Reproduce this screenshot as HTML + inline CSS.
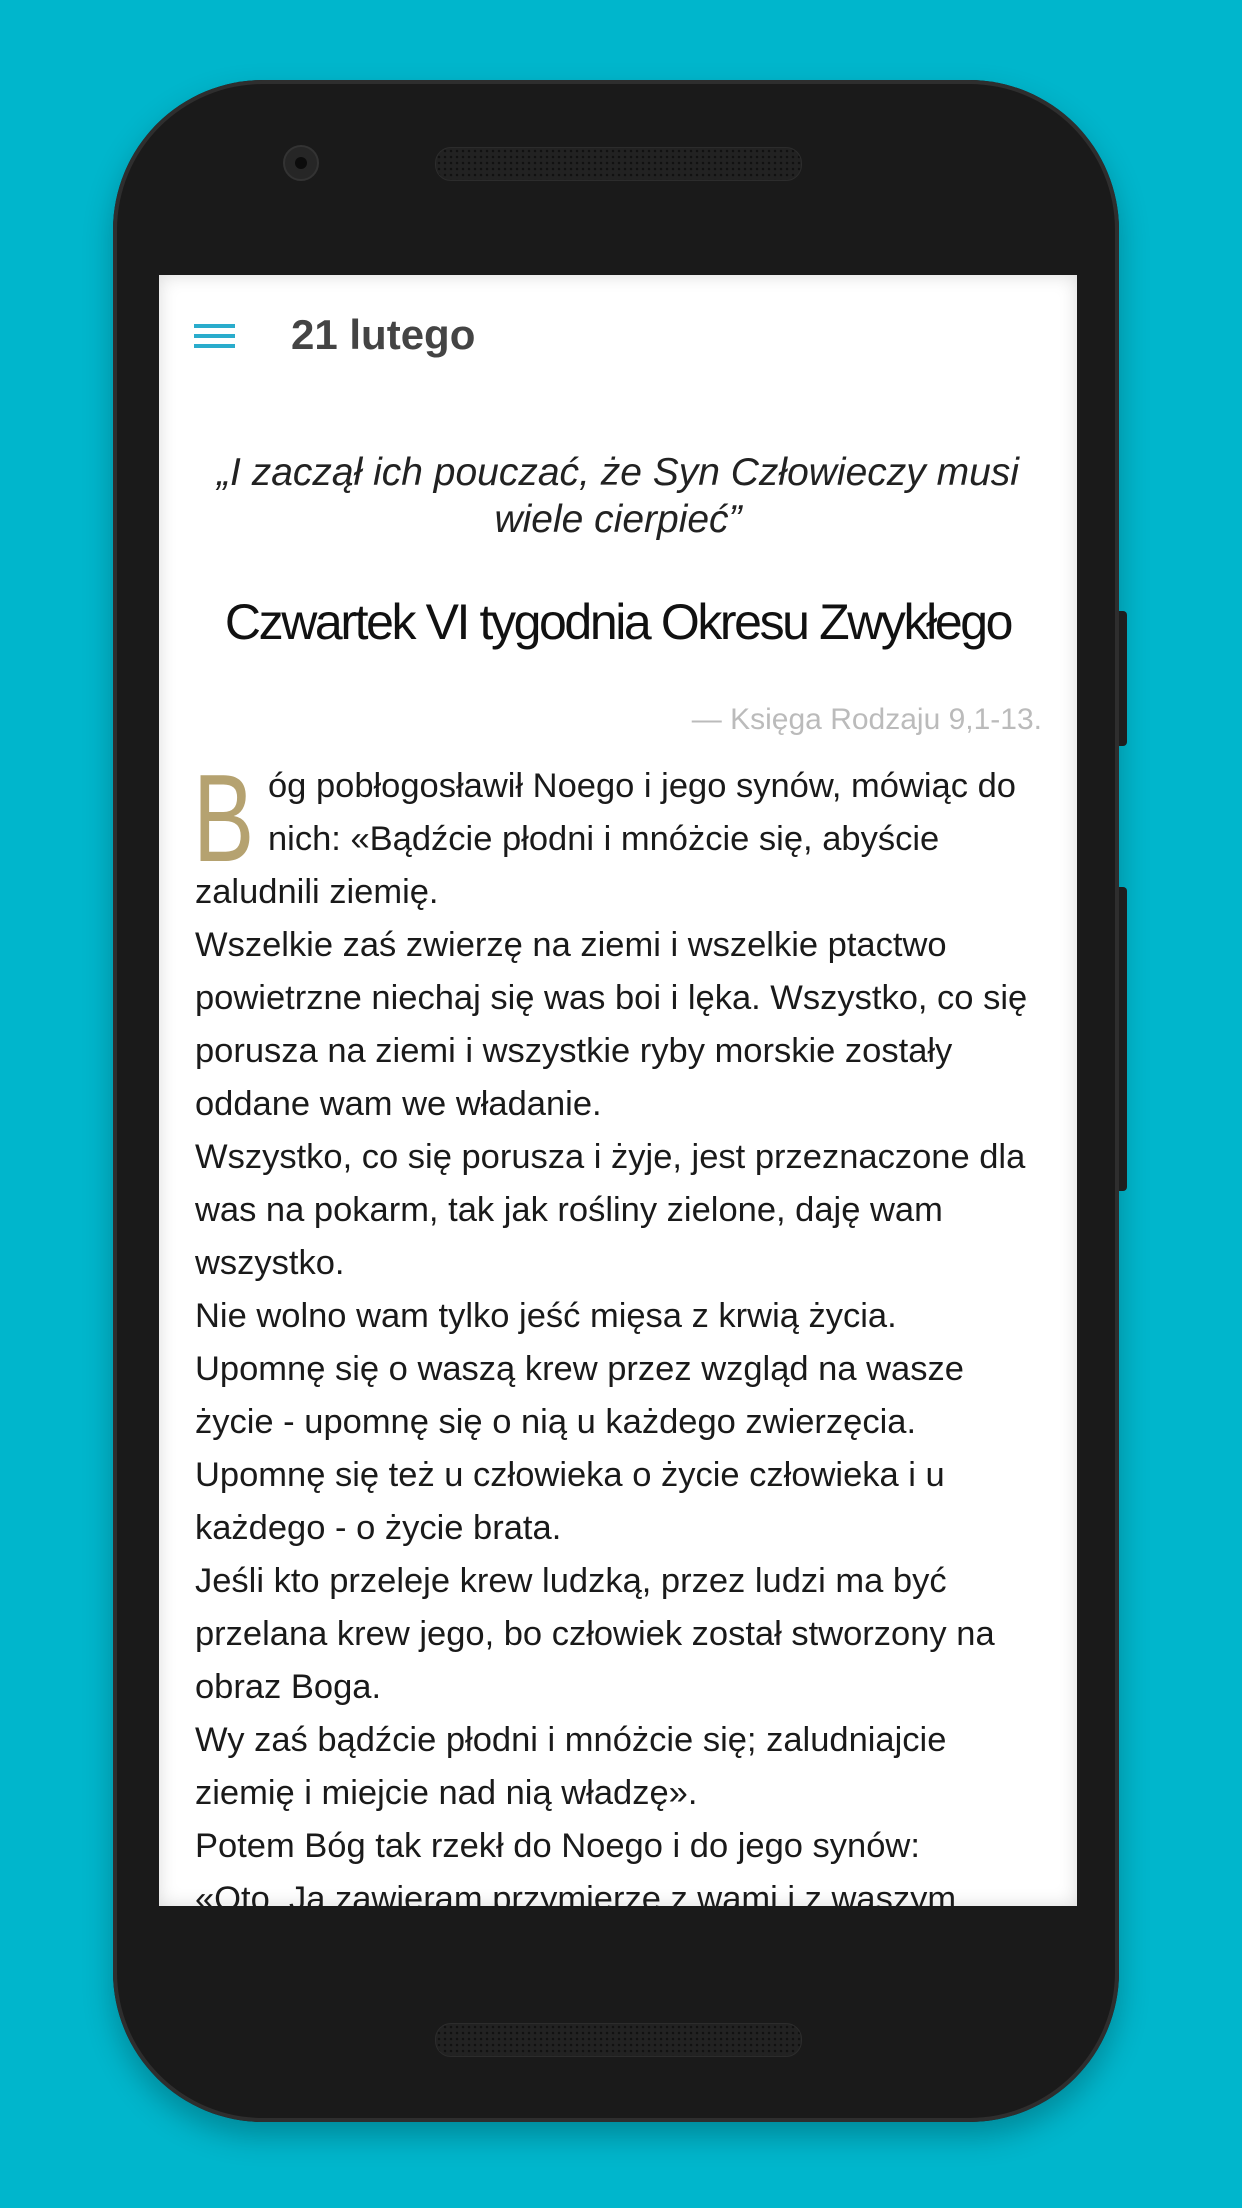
<!DOCTYPE html>
<html><head><meta charset="utf-8"><style>
html,body{margin:0;padding:0}
body{width:1242px;height:2208px;background:#00b6cc;position:relative;overflow:hidden;font-family:"Liberation Sans",sans-serif}
.phone{position:absolute;left:113px;top:80px;width:1006px;height:2042px;background:#1a1a1a;border-radius:150px;box-shadow:0 0 0 4px #2e2e2e inset,0 14px 30px rgba(0,0,0,.25)}
.btn{position:absolute;left:1117px;width:10px;background:#222;border-radius:0 4px 4px 0}
.speaker{position:absolute;left:322px;width:365px;height:32px;border-radius:16px;background:#222;border:1px solid #2c2c2c;
background-image:radial-gradient(#111 1.2px,transparent 1.4px);background-size:6px 6px}
.cam{position:absolute;left:170px;top:65px;width:36px;height:36px;border-radius:50%;background:#262626;border:2px solid #333;box-sizing:border-box}
.cam:after{content:"";position:absolute;left:10px;top:10px;width:12px;height:12px;border-radius:50%;background:#0c0c0c}
.screen{position:absolute;left:159px;top:275px;width:918px;height:1631px;background:#fff;overflow:hidden;box-shadow:inset 0 0 18px rgba(0,0,0,.15)}
.screen div{position:absolute;white-space:nowrap}
.ham{left:35px;width:41px;height:4px;background:#2aaccc}
.t{left:36px;font-size:34.5px;color:#1a1a1a;line-height:40px}
</style></head><body>
<div class="btn" style="top:611px;height:135px"></div>
<div class="btn" style="top:887px;height:304px"></div>
<div class="phone">
<div class="cam"></div>
<div class="speaker" style="top:67px"></div>
<div class="speaker" style="top:1943px"></div>
</div>
<div class="screen">
<div class="ham" style="top:49px"></div>
<div class="ham" style="top:59px"></div>
<div class="ham" style="top:69px"></div>
<div style="left:132px;top:36px;font-size:42px;font-weight:bold;color:#444">21 lutego</div>
<div style="left:0;width:918px;text-align:center;top:174px;font-size:39px;font-style:italic;color:#222;line-height:47px;white-space:normal">„I zaczął ich pouczać, że Syn Człowieczy musi<br>wiele cierpieć”</div>
<div style="left:0;width:918px;text-align:center;top:318px;font-size:50px;color:#111;letter-spacing:-2.4px">Czwartek VI tygodnia Okresu Zwykłego</div>
<div style="right:35px;top:428px;font-size:30px;color:#bbb">— Księga Rodzaju 9,1-13.</div>
<div style="left:34px;top:482px;font-size:124px;color:#b5a270;line-height:124px;transform:scaleX(0.74);transform-origin:left top">B</div>
<div class="t" style="left:109px;top:491px">óg pobłogosławił Noego i jego synów, mówiąc do</div>
<div class="t" style="left:109px;top:544px">nich: «Bądźcie płodni i mnóżcie się, abyście</div>
<div class="t" style="top:597px">zaludnili ziemię.</div>
<div class="t" style="top:650px">Wszelkie zaś zwierzę na ziemi i wszelkie ptactwo</div>
<div class="t" style="top:703px">powietrzne niechaj się was boi i lęka. Wszystko, co się</div>
<div class="t" style="top:756px">porusza na ziemi i wszystkie ryby morskie zostały</div>
<div class="t" style="top:809px">oddane wam we władanie.</div>
<div class="t" style="top:862px">Wszystko, co się porusza i żyje, jest przeznaczone dla</div>
<div class="t" style="top:915px">was na pokarm, tak jak rośliny zielone, daję wam</div>
<div class="t" style="top:968px">wszystko.</div>
<div class="t" style="top:1021px">Nie wolno wam tylko jeść mięsa z krwią życia.</div>
<div class="t" style="top:1074px">Upomnę się o waszą krew przez wzgląd na wasze</div>
<div class="t" style="top:1127px">życie - upomnę się o nią u każdego zwierzęcia.</div>
<div class="t" style="top:1180px">Upomnę się też u człowieka o życie człowieka i u</div>
<div class="t" style="top:1233px">każdego - o życie brata.</div>
<div class="t" style="top:1286px">Jeśli kto przeleje krew ludzką, przez ludzi ma być</div>
<div class="t" style="top:1339px">przelana krew jego, bo człowiek został stworzony na</div>
<div class="t" style="top:1392px">obraz Boga.</div>
<div class="t" style="top:1445px">Wy zaś bądźcie płodni i mnóżcie się; zaludniajcie</div>
<div class="t" style="top:1498px">ziemię i miejcie nad nią władzę».</div>
<div class="t" style="top:1551px">Potem Bóg tak rzekł do Noego i do jego synów:</div>
<div class="t" style="top:1604px">«Oto, Ja zawieram przymierze z wami i z waszym</div>
</div>
</body></html>
